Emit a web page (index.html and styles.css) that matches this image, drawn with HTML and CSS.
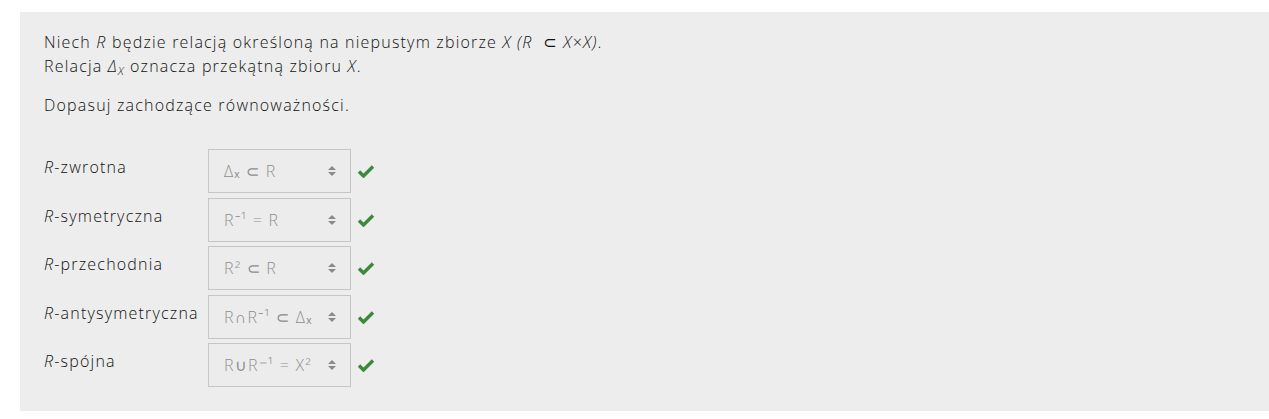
FILE: index.html
```html
<!DOCTYPE html>
<html lang="pl">
<head>
<meta charset="utf-8">
<title>Relacje</title>
<link rel="stylesheet" href="styles.css">
</head>
<body>
<div class="panel">
  <div class="qtext">
    <p class="p1">Niech <i>R</i> będzie relacją określoną na niepustym zbiorze <i>X (R&nbsp;&nbsp;⊂ X×X)</i>.<br>Relacja <i>Δ<sub>X</sub></i> oznacza przekątną zbioru <i>X</i>.</p>
    <p class="p2">Dopasuj zachodzące równoważności.</p>
  </div>
  <div class="matches">
    <div class="label"><i>R</i>-zwrotna</div>
    <div class="select"><span class="val">Δₓ ⊂ R</span><svg class="arr" viewBox="0 0 8 12" width="8" height="12"><path d="M0 5 L4 1 L8 5 Z M0 7 L4 11 L8 7 Z" fill="#8a8a8a"/></svg></div>
    <svg class="check" viewBox="0 0 18 14" width="18" height="14"><path d="M2 7.5 L6.5 12 L16 2.5" fill="none" stroke="#3a8a3a" stroke-width="3.4"/></svg>

    <div class="label"><i>R</i>-symetryczna</div>
    <div class="select"><span class="val">R⁻¹ = R</span><svg class="arr" viewBox="0 0 8 12" width="8" height="12"><path d="M0 5 L4 1 L8 5 Z M0 7 L4 11 L8 7 Z" fill="#8a8a8a"/></svg></div>
    <svg class="check" viewBox="0 0 18 14" width="18" height="14"><path d="M2 7.5 L6.5 12 L16 2.5" fill="none" stroke="#3a8a3a" stroke-width="3.4"/></svg>

    <div class="label"><i>R</i>-przechodnia</div>
    <div class="select"><span class="val">R² ⊂ R</span><svg class="arr" viewBox="0 0 8 12" width="8" height="12"><path d="M0 5 L4 1 L8 5 Z M0 7 L4 11 L8 7 Z" fill="#8a8a8a"/></svg></div>
    <svg class="check" viewBox="0 0 18 14" width="18" height="14"><path d="M2 7.5 L6.5 12 L16 2.5" fill="none" stroke="#3a8a3a" stroke-width="3.4"/></svg>

    <div class="label"><i>R</i>-antysymetryczna</div>
    <div class="select"><span class="val">R∩R⁻¹ ⊂ Δₓ</span><svg class="arr" viewBox="0 0 8 12" width="8" height="12"><path d="M0 5 L4 1 L8 5 Z M0 7 L4 11 L8 7 Z" fill="#8a8a8a"/></svg></div>
    <svg class="check" viewBox="0 0 18 14" width="18" height="14"><path d="M2 7.5 L6.5 12 L16 2.5" fill="none" stroke="#3a8a3a" stroke-width="3.4"/></svg>

    <div class="label"><i>R</i>-spójna</div>
    <div class="select"><span class="val">R∪R⁻¹ = X²</span><svg class="arr" viewBox="0 0 8 12" width="8" height="12"><path d="M0 5 L4 1 L8 5 Z M0 7 L4 11 L8 7 Z" fill="#8a8a8a"/></svg></div>
    <svg class="check" viewBox="0 0 18 14" width="18" height="14"><path d="M2 7.5 L6.5 12 L16 2.5" fill="none" stroke="#3a8a3a" stroke-width="3.4"/></svg>
  </div>
</div>
</body>
</html>
```

FILE: styles.css
```css
html, body {
  margin: 0;
  padding: 0;
  background: #ffffff;
}
body {
  font-family: "Open Sans", "DejaVu Sans", sans-serif;
  font-size: 16px;
  font-weight: 300;
  letter-spacing: 1.2px;
  color: #111111;
}
.panel {
  margin: 12px 0 0 20px;
  height: 399px;
  box-sizing: border-box;
  background: #ededed;
  padding: 18px 24px 0 24px;
}
.qtext p {
  margin: 0;
  line-height: 24px;
}
.qtext .p2 {
  margin-top: 15px;
}
sub {
  font-size: 11px;
  vertical-align: -3px;
  line-height: 0;
}
.matches {
  margin-top: 32px;
  display: grid;
  grid-template-columns: 164px 143px auto;
  row-gap: 4.5px;
  align-items: start;
}
.label {
  padding-top: 7px;
  line-height: 22px;
}
.select {
  box-sizing: border-box;
  height: 44px;
  border: 1px solid #c6c6c6;
  background: #ececec;
  display: flex;
  align-items: center;
  justify-content: space-between;
  padding: 0 14px 0 15px;
  color: #8e8e8e;
}
.select .val {
  white-space: nowrap;
}
.arr {
  flex: none;
}
.check {
  align-self: center;
  margin-left: 6px;
}
```
